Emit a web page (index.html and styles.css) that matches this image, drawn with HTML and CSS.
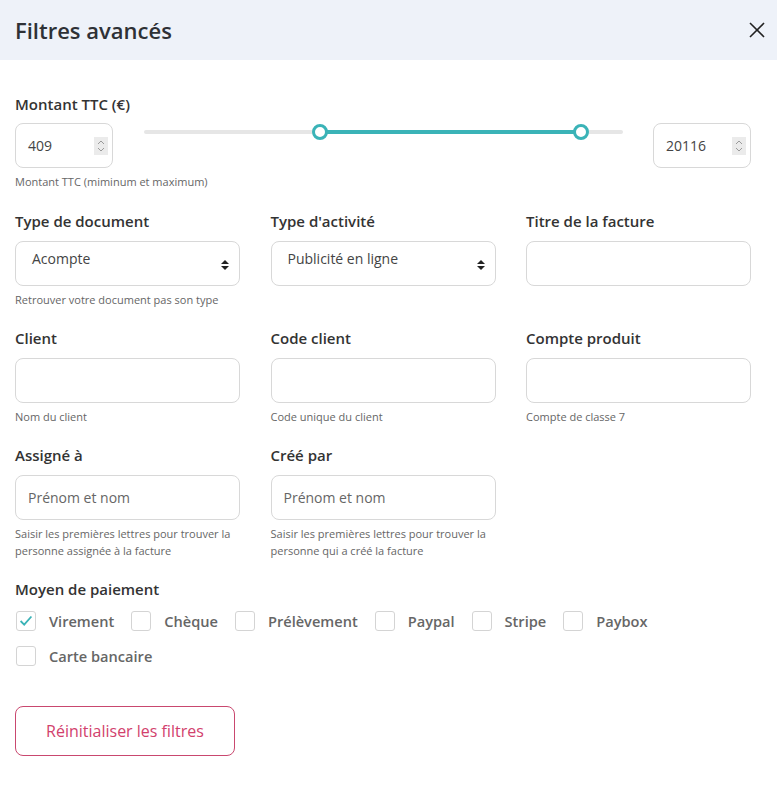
FILE: index.html
```html
<!DOCTYPE html>
<html lang="fr">
<head>
  <meta charset="UTF-8">
  <title>Filtres avancés</title>
  <link rel="stylesheet" href="styles.css">
</head>
<body>
  <!-- Header -->
  <div class="header">
    <h1 class="title">Filtres avancés</h1>
    <svg class="close" viewBox="0 0 16 16">
      <line x1="1" y1="1" x2="15" y2="15"/>
      <line x1="15" y1="1" x2="1" y2="15"/>
    </svg>
  </div>

  <div class="content">
    <!-- Montant -->
    <div class="field amount">
      <p class="label">Montant TTC (€)</p>
      <div class="range-row">
        <div class="number-box">
          <span>409</span>
          <svg class="spinner" viewBox="0 0 14 18">
            <rect width="14" height="18" fill="#ebebeb"/>
            <polyline points="4,7 7,4 10,7"/>
            <polyline points="4,11 7,14 10,11"/>
          </svg>
        </div>
        <div class="slider">
          <div class="track"></div>
          <div class="track-active"></div>
          <span class="thumb thumb--min"></span>
          <span class="thumb thumb--max"></span>
        </div>
        <div class="number-box">
          <span>20116</span>
          <svg class="spinner" viewBox="0 0 14 18">
            <rect width="14" height="18" fill="#ebebeb"/>
            <polyline points="4,7 7,4 10,7"/>
            <polyline points="4,11 7,14 10,11"/>
          </svg>
        </div>
      </div>
      <p class="help">Montant TTC (miminum et maximum)</p>
    </div>

    <!-- Grid of fields -->
    <div class="grid">
      <div class="field">
        <p class="label">Type de document</p>
        <div class="select">
          <span>Acompte</span>
          <svg class="select-arrows" viewBox="0 0 8 12">
            <polygon points="0,5 4,1 8,5"/>
            <polygon points="0,7 4,11 8,7"/>
          </svg>
        </div>
        <p class="help">Retrouver votre document pas son type</p>
      </div>
      <div class="field">
        <p class="label">Type d'activité</p>
        <div class="select">
          <span>Publicité en ligne</span>
          <svg class="select-arrows" viewBox="0 0 8 12">
            <polygon points="0,5 4,1 8,5"/>
            <polygon points="0,7 4,11 8,7"/>
          </svg>
        </div>
      </div>
      <div class="field">
        <p class="label">Titre de la facture</p>
        <input class="input" type="text">
      </div>

      <div class="field">
        <p class="label">Client</p>
        <input class="input" type="text">
        <p class="help">Nom du client</p>
      </div>
      <div class="field">
        <p class="label">Code client</p>
        <input class="input" type="text">
        <p class="help">Code unique du client</p>
      </div>
      <div class="field">
        <p class="label">Compte produit</p>
        <input class="input" type="text">
        <p class="help">Compte de classe 7</p>
      </div>

      <div class="field">
        <p class="label">Assigné à</p>
        <input class="input" type="text" placeholder="Prénom et nom">
        <p class="help">Saisir les premières lettres pour trouver la personne assignée à la facture</p>
      </div>
      <div class="field">
        <p class="label">Créé par</p>
        <input class="input" type="text" placeholder="Prénom et nom">
        <p class="help">Saisir les premières lettres pour trouver la personne qui a créé la facture</p>
      </div>
    </div>

    <!-- Payment -->
    <div class="field payment">
      <p class="label">Moyen de paiement</p>
      <div class="checks">
        <label class="check">
          <span class="box">
            <svg viewBox="0 0 20 20"><polyline points="4,10 8,14 16,5"/></svg>
          </span>
          Virement
        </label>
        <label class="check"><span class="box"></span>Chèque</label>
        <label class="check"><span class="box"></span>Prélèvement</label>
        <label class="check"><span class="box"></span>Paypal</label>
        <label class="check"><span class="box"></span>Stripe</label>
        <label class="check"><span class="box"></span>Paybox</label>
        <label class="check"><span class="box"></span>Carte bancaire</label>
      </div>
    </div>

    <button class="reset">Réinitialiser les filtres</button>
  </div>
</body>
</html>
```

FILE: styles.css
```css
*, *:before,
*:after {
  box-sizing: border-box;
}

body {
  margin: 0;
  font-family: 'Open Sans', sans-serif;
  color: #333;
  background: #fff;
}

p {
  margin: 0;
}

.header {
  height: 60px;
  background: #eef2f9;
  display: flex;
  align-items: center;
  justify-content: space-between;
  padding: 0 12px 0 15px;
}

.title {
  margin: 0;
  font-size: 22px;
  font-weight: 600;
  color: #2e3136;
}

.close {
  width: 16px;
  height: 16px;
  stroke: #222;
  stroke-width: 1.6;
}

.content {
  padding: 34px 26px 0 15px;
}

.field {
  display: flex;
  flex-direction: column;
}

.label {
  font-size: 15px;
  font-weight: 600;
  line-height: 20px;
  color: #333;
  margin-bottom: 10px;
}

.amount .label {
  margin-bottom: 9px;
}

.help {
  font-size: 11px;
  line-height: 17px;
  color: #666;
  margin-top: 5px;
}

/* Range */
.range-row {
  display: flex;
  align-items: flex-start;
}

.number-box {
  width: 98px;
  height: 45px;
  border: 1px solid #d8d8d8;
  border-radius: 8px;
  display: flex;
  align-items: center;
  justify-content: space-between;
  padding: 0 4px 0 12px;
  font-size: 14px;
  color: #444;
}

.spinner {
  width: 14px;
  height: 18px;
  fill: none;
  stroke: #9a9a9a;
  stroke-width: 1;
}

.spinner rect {
  stroke: none;
}

.slider {
  flex: 1;
  margin: 0 30px 0 31px;
  position: relative;
  height: 18px;
}

.track {
  margin-top: 7px;
  height: 4px;
  border-radius: 2px;
  background: #e6e6e6;
}

.track-active {
  position: absolute;
  top: 7px;
  left: 176px;
  width: 261px;
  height: 4px;
  background: #3ab3b7;
}

.thumb {
  position: absolute;
  top: 1px;
  width: 16px;
  height: 16px;
  margin-left: -8px;
  border-radius: 50%;
  border: 3px solid #3ab3b7;
  background: #fff;
}

.thumb--min {
  left: 176px;
}

.thumb--max {
  left: 437px;
}

/* Grid */
.grid {
  display: grid;
  grid-template-columns: repeat(3, 225px);
  column-gap: 30.5px;
  row-gap: 20px;
  margin-top: 21px;
}

.select {
  height: 45px;
  border: 1px solid #d8d8d8;
  border-radius: 8px;
  display: flex;
  justify-content: space-between;
  padding: 0 10px 0 16px;
  font-size: 14px;
  color: #444;
}

.select span {
  padding-top: 7px;
}

.select-arrows {
  align-self: center;
  width: 8px;
  height: 12px;
  margin-top: 2px;
  fill: #222;
}

.input {
  height: 45px;
  width: 100%;
  border: 1px solid #d8d8d8;
  border-radius: 8px;
  padding: 0 12px;
  font: 400 14px 'Open Sans', sans-serif;
  color: #444;
  outline: 0;
}

.input::placeholder {
  color: #666;
}

/* Payment */
.payment {
  margin-top: 20px;
}

.checks {
  display: flex;
  flex-wrap: wrap;
  column-gap: 17px;
  row-gap: 11px;
  padding-left: 1px;
}

.check {
  display: flex;
  align-items: center;
  gap: 13px;
  height: 24px;
  font-size: 14.6px;
  font-weight: 600;
  color: #666;
}

.box {
  width: 20px;
  height: 20px;
  border: 1px solid #d4d4d4;
  border-radius: 3px;
  display: flex;
}

.box svg {
  width: 100%;
  height: 100%;
  fill: none;
  stroke: #3ab3b7;
  stroke-width: 2;
}

.reset {
  margin-top: 38px;
  width: 220px;
  height: 50px;
  border: 1px solid #c9486f;
  border-radius: 8px;
  background: #fff;
  font: 400 16px 'Open Sans', sans-serif;
  color: #d2416d;
  cursor: pointer;
}
```
